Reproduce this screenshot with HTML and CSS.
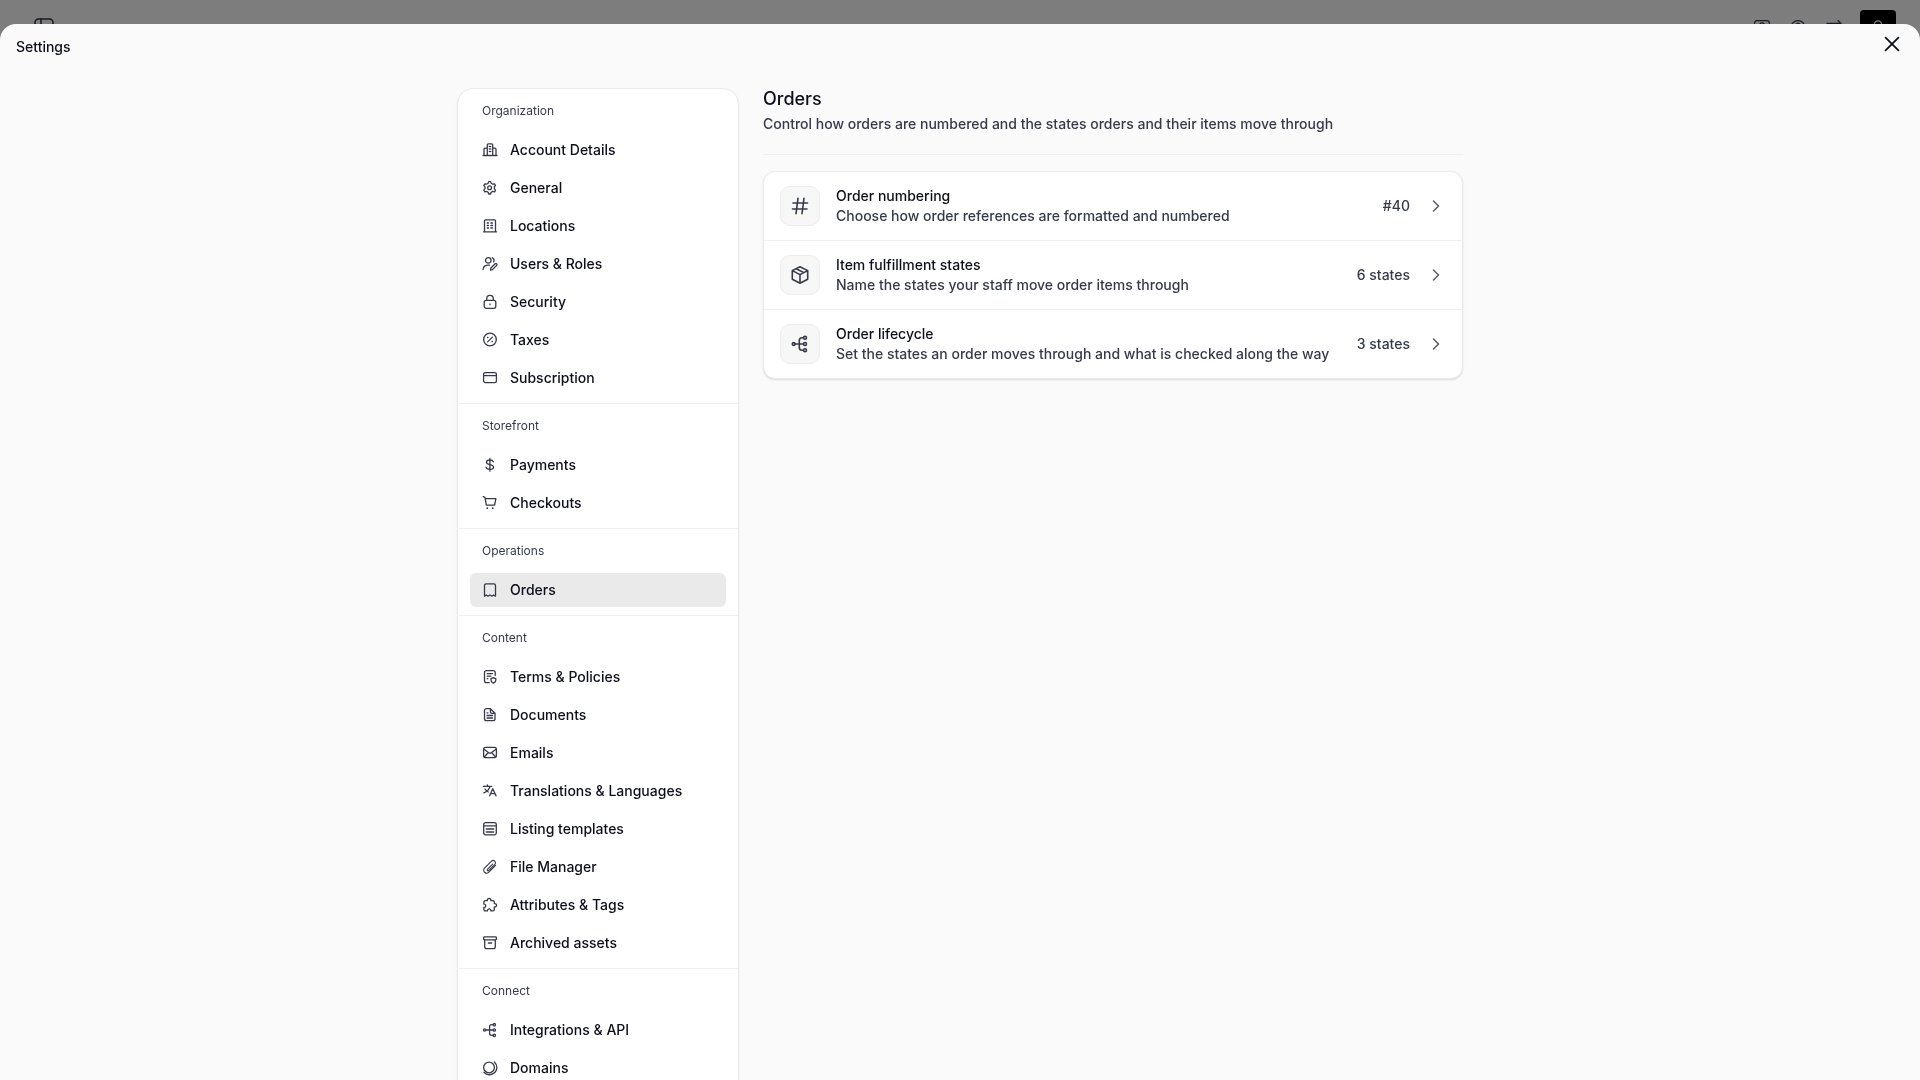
FILE: index.html
```html
<!DOCTYPE html>
<html lang="en">

<head>
    <meta charset="UTF-8">
    <meta name="viewport" content="width=device-width, initial-scale=1.0">
    <title>Settings</title>
    <link rel="stylesheet" href="styles.css">
</head>

<body>
    <header class="topbar">
        <button class="top-btn" aria-label="Toggle sidebar">
            <svg class="icon icon-lg" viewBox="0 0 20 20"><rect x="1" y="1" width="18" height="18" rx="3.5" /><path d="M7 1v18" /></svg>
        </button>
        <div class="top-actions">
            <button class="top-btn" aria-label="Contacts">
                <svg class="icon" viewBox="0 0 16 16"><rect x=".5" y=".7" width="15" height="14.6" rx="2.5" /><circle cx="8" cy="5" r="2.2" /><path d="M4 12c1-3 7-3 8 0" /></svg>
            </button>
            <button class="top-btn" aria-label="Help">
                <svg class="icon" viewBox="0 0 16 16"><circle cx="8" cy="8" r="7.3" /><path d="M6 5.5a2 2 0 1 1 2 2V10" /></svg>
            </button>
            <button class="top-btn" aria-label="Switch">
                <svg class="icon" viewBox="0 0 16 16"><path d="M1 3.4h14M12 .6l3 2.800-3 2.800M15 12H1M4 9l-3 3 3 3" /></svg>
            </button>
            <button class="top-btn avatar" aria-label="Profile">
                <svg class="icon" viewBox="0 0 16 16"><circle cx="8" cy="4.400" r="3.600" /><path d="M1 15c1-6 13-6 14 0" /></svg>
            </button>
        </div>
    </header>

    <div class="backdrop"></div>

    <main class="sheet">
        <div class="sheet-head">
            <h1>Settings</h1>
            <button class="close" aria-label="Close">
                <svg class="icon icon-lg" viewBox="0 0 20 20"><path d="M3.600 3.600l12.800 12.800M16.400 3.600L3.600 16.400" /></svg>
            </button>
        </div>

        <div class="layout">
            <nav class="sidebar">
                <section class="group">
                    <h2>Organization</h2>
                    <ul>
                        <li><a href="#"><svg class="icon" viewBox="0 0 16 16"><path d="M1 13.500h14M5.300 13.500V2.800a1 1 0 0 1 1-1h3.400a1 1 0 0 1 1 1v10.700M2 13.500V7.200a1 1 0 0 1 1-1h2.300M10.700 6.200H13a1 1 0 0 1 1 1v6.300M7.300 4.500h.2M8.600 4.500h.2M7.300 7h.2M8.600 7h.2M7.300 9.500h.2M8.600 9.500h.2" /></svg>Account Details</a></li>
                        <li><a href="#"><svg class="icon" viewBox="0 0 16 16"><path d="M6.700 1.600h1.900l.6 1.700 1.500.9 1.800-.4 1 1.700-1.200 1.400v1.800l1.200 1.400-1 1.700-1.800-.4-1.500.9-.6 1.700H6.700l-.6-1.700-1.500-.9-1.800.4-1-1.700L3 8.700V6.900L1.800 5.500l1-1.700 1.800.4 1.500-.9z" /><circle cx="7.600" cy="7.800" r="1.900" /></svg>General</a></li>
                        <li><a href="#"><svg class="icon" viewBox="0 0 16 16"><path d="M1.500 13.800h13M2.500 13.800V2.700c0-.5.4-.9.900-.9h9.200c.5 0 .9.400.9.900v11.100M5.200 5h1.200M8.900 5h1.600M5.200 7.500h1.200M8.900 7.500h1.600M5.200 10h1.200M8.900 10h1.600" /></svg>Locations</a></li>
                        <li><a href="#"><svg class="icon" viewBox="0 0 16 16"><circle cx="6.300" cy="4.400" r="2.800" /><path d="M10.400 1.800c1.500.7 2 2.600 1.200 4.100M1 13.500c.2-3.300 3-5 6.500-4.300M8.500 14l.4-2 4.200-4.200c1.200-.8 2.400.4 1.600 1.600L10.500 13.600z" /></svg>Users &amp; Roles</a></li>
                        <li><a href="#"><svg class="icon" viewBox="0 0 16 16"><rect x="2.200" y="6.300" width="11.600" height="8" rx="2" /><path d="M4.700 6.300V4.700a3.300 3.300 0 0 1 6.600 0v1.600M8 9.900v.8" /></svg>Security</a></li>
                        <li><a href="#"><svg class="icon" viewBox="0 0 16 16"><circle cx="8" cy="7.500" r="6.300" /><path d="M5.600 9.900l4.800-4.800M5.500 5.500h.5M10 9.500h.5" /></svg>Taxes</a></li>
                        <li><a href="#"><svg class="icon" viewBox="0 0 16 16"><rect x="1.600" y="2.600" width="12.800" height="10" rx="1.600" /><path d="M1.600 5.600h12.800" /></svg>Subscription</a></li>
                    </ul>
                </section>

                <section class="group">
                    <h2>Storefront</h2>
                    <ul>
                        <li><a href="#"><svg class="icon" viewBox="0 0 16 16"><path d="M11.300 4.800C10.800 3.500 9.500 3 7.700 3 5.600 3 4.400 3.900 4.400 5.200c0 3.300 7.200 1.300 7.200 4.900 0 1.500-1.400 2.400-3.700 2.400-2.200 0-3.500-.8-3.900-2.300M7.900 1.500v12.700" /></svg>Payments</a></li>
                        <li><a href="#"><svg class="icon" viewBox="0 0 16 16"><path d="M1.200 1.600l1.800.8 1.300 7.800h8.300l1.300-6.600H3.300" /><circle class="dot" cx="5.300" cy="13.200" r=".9" /><circle class="dot" cx="10.700" cy="13.200" r=".9" /></svg>Checkouts</a></li>
                    </ul>
                </section>

                <section class="group">
                    <h2>Operations</h2>
                    <ul>
                        <li><a href="#" class="active" aria-current="page"><svg class="icon" viewBox="0 0 16 16"><path d="M2.500 14.200V3.400c0-.9.7-1.600 1.600-1.600h7.800c.9 0 1.600.7 1.600 1.600v10.800l-1.800-1.200-1.800 1.200L8 13l-1.900 1.200L4.300 13z" /></svg>Orders</a></li>
                    </ul>
                </section>

                <section class="group">
                    <h2>Content</h2>
                    <ul>
                        <li><a href="#"><svg class="icon" viewBox="0 0 16 16"><path d="M13.200 6.400V3.600c0-1-.8-1.900-1.900-1.900H4.400c-1 0-1.900.8-1.900 1.900v8.200c0 1 .8 1.900 1.900 1.900h2.800M5.200 4.600h5.300M5.200 7.200h3.600M5.200 9.700h.6M11.400 8.700l2.400.9v1.700c0 1.300-.9 2.100-2.400 2.800-1.500-.7-2.400-1.500-2.400-2.800V9.600z" /></svg>Terms &amp; Policies</a></li>
                        <li><a href="#"><svg class="icon" viewBox="0 0 16 16"><path d="M8.400 1.700h-4c-1 0-1.900.8-1.900 1.900v8.200c0 1 .8 1.900 1.900 1.900h6.700c1 0 1.900-.8 1.900-1.900V6.300zM8.400 1.700v3.200c0 .8.600 1.400 1.400 1.400H13M5 5.800h1M5 8.500h5.500M5 11h5.500" /></svg>Documents</a></li>
                        <li><a href="#"><svg class="icon" viewBox="0 0 16 16"><rect x="1.600" y="2.400" width="12.800" height="10.200" rx="1.800" /><path d="M2 4.200l4.800 3.500c.7.500 1.700.5 2.400 0L14 4.200M2.200 12l3.700-4M13.800 12l-3.700-4" /></svg>Emails</a></li>
                        <li><a href="#"><svg class="icon" viewBox="0 0 16 16"><path d="M1.400 3.400h8.200M5.500 1.900v1.500M8 3.400C7.200 6.500 4.800 8.800 1.800 9.900M3 6c.8 1.400 1.900 2.300 3.200 3M7.600 12.800l3.200-7 3.200 7M8.700 10.700h4.200" /></svg>Translations &amp; Languages</a></li>
                        <li><a href="#"><svg class="icon" viewBox="0 0 16 16"><rect x="1.700" y="1.700" width="12.600" height="12.200" rx="1.800" /><path d="M1.700 4.900h12.600M4.300 8h7.400M4.300 11h7.400" /></svg>Listing templates</a></li>
                        <li><a href="#"><svg class="icon icon-thin" viewBox="0 0 16 16"><path d="M10.600 5.200l-5.200 5.200c-.8.800.4 2 1.200 1.200l6-6c2.300-2.300-1-5.600-3.300-3.300L2.700 8.900c-3 3 1.200 7.200 4.200 4.200L13.600 6.400" /></svg>File Manager</a></li>
                        <li><a href="#"><svg class="icon" viewBox="0 0 16 16"><path d="M5.400 3.700c-.6-3 3.900-3 3.400 0h2.100c.8 0 1.400.6 1.400 1.400v1.500c3-.4 3 3.800 0 3.400v2.500c0 .8-.6 1.400-1.400 1.400H8.900c.3-2.700-3.700-2.700-3.400 0H3.300c-.8 0-1.400-.6-1.400-1.400v-2.100c2.500.4 2.500-3.500 0-3.200V5.100c0-.8.600-1.400 1.400-1.400z" /></svg>Attributes &amp; Tags</a></li>
                        <li><a href="#"><svg class="icon" viewBox="0 0 16 16"><rect x="1.600" y="1.900" width="12.800" height="3" rx=".8" /><path d="M2.700 4.900v6.800c0 1.100.8 1.900 1.900 1.900h6.800c1.100 0 1.900-.8 1.900-1.900V4.900M6.300 8h3.400" /></svg>Archived assets</a></li>
                    </ul>
                </section>

                <section class="group">
                    <h2>Connect</h2>
                    <ul>
                        <li><a href="#"><svg class="icon" viewBox="0 0 16 16"><circle cx="2.600" cy="8" r="1.100" /><circle cx="12.300" cy="2.700" r="1.200" /><circle cx="12.300" cy="8" r="1.200" /><circle cx="12.300" cy="13.300" r="1.200" /><path d="M3.700 8h7.400M11.100 2.700H9.600c-1.200 0-2 .8-2 2v6.600c0 1.200.8 2 2 2h1.500" /></svg>Integrations &amp; API</a></li>
                        <li><a href="#"><svg class="icon" viewBox="0 0 16 16"><circle cx="7" cy="7.500" r="5.400" /><path d="M12.300 2c3.900 3.500 3.200 9.700-1.600 11.900-3 1.300-6.500.8-8.700-1.600" /></svg>Domains</a></li>
                    </ul>
                </section>
            </nav>

            <div class="content">
                <div class="content-head">
                    <h2>Orders</h2>
                    <p>Control how orders are numbered and the states orders and their items move through</p>
                </div>

                <div class="card">
                    <a href="#" class="row">
                        <span class="tile"><svg class="icon icon-lg" viewBox="0 0 20 20"><path d="M3 7h14.500M2.500 13H17M8 2.300L6 17.700M14 2.300l-2 15.400" /></svg></span>
                        <span class="text">
                            <span class="title">Order numbering</span>
                            <span>Choose how order references are formatted and numbered</span>
                        </span>
                        <span>#40</span>
                        <svg class="icon icon-lg chevron" viewBox="0 0 20 20"><path d="M7.500 5l5 5-5 5" /></svg>
                    </a>
                    <a href="#" class="row">
                        <span class="tile"><svg class="icon icon-lg" viewBox="0 0 20 20"><path d="M10 1.800l7.700 3.800v8.700L10 18.300l-7.700-4V5.600zM2.300 5.600L10 9.600l7.700-4M10 9.600v8.700M6.200 3.700l7.700 3.900" /></svg></span>
                        <span class="text">
                            <span class="title">Item fulfillment states</span>
                            <span>Name the states your staff move order items through</span>
                        </span>
                        <span>6 states</span>
                        <svg class="icon icon-lg chevron" viewBox="0 0 20 20"><path d="M7.500 5l5 5-5 5" /></svg>
                    </a>
                    <a href="#" class="row">
                        <span class="tile"><svg class="icon icon-lg" viewBox="0 0 20 20"><circle cx="3.700" cy="10" r="1.400" /><circle cx="15" cy="3.800" r="1.500" /><circle cx="15" cy="10" r="1.500" /><circle cx="15" cy="16.200" r="1.500" /><path d="M5.100 10h8.400M13.500 3.800H12c-1.700 0-2.700 1-2.700 2.700v7c0 1.700 1 2.700 2.700 2.700h1.500" /></svg></span>
                        <span class="text">
                            <span class="title">Order lifecycle</span>
                            <span>Set the states an order moves through and what is checked along the way</span>
                        </span>
                        <span>3 states</span>
                        <svg class="icon icon-lg chevron" viewBox="0 0 20 20"><path d="M7.500 5l5 5-5 5" /></svg>
                    </a>
                </div>
            </div>
        </div>
    </main>
</body>

</html>
```
FILE: styles.css
```css
* {
    margin: 0;
    padding: 0;
    box-sizing: border-box;
}

body {
    font-family: Inter, sans-serif;
    font-size: 14px;
    font-weight: 500;
    line-height: 20px;
    color: #363a4b;
    background-color: #fafafa;
    overflow: hidden;
}

button {
    border: none;
    background: none;
    cursor: pointer;
}

a {
    color: inherit;
    text-decoration: none;
}

ul {
    list-style: none;
}

h1,
h2 {
    font-weight: 500;
    color: #0d0f1c;
}

.icon {
    width: 16px;
    height: 16px;
    flex-shrink: 0;
    display: block;
    fill: none;
    stroke: #363a4b;
    stroke-width: 1.3;
    stroke-linecap: round;
    stroke-linejoin: round;
}

.icon-lg {
    width: 20px;
    height: 20px;
    stroke-width: 1.6;
}

.icon-thin {
    stroke-width: 1.1;
}

.dot {
    fill: #363a4b;
    stroke: none;
}

/* page behind the sheet */
.topbar {
    display: flex;
    justify-content: space-between;
    align-items: center;
    height: 56px;
    padding: 0 24px 0 34px;
}

.top-actions {
    display: flex;
    align-items: center;
    gap: 16px;
}

.top-btn {
    display: flex;
    align-items: center;
    justify-content: center;
    width: 20px;
    height: 20px;
}

.avatar {
    width: 36px;
    height: 36px;
    border-radius: 4px;
    background-color: #000;
}

.avatar .icon {
    stroke: #fff;
}

.backdrop {
    position: fixed;
    inset: 0;
    background-color: rgba(0, 0, 0, 0.5);
}

.sheet {
    position: fixed;
    inset: 24px 0 0;
    overflow: hidden;
    border-radius: 16px 16px 0 0;
    background-color: #fafafa;
}

.sheet-head {
    display: flex;
    justify-content: space-between;
    align-items: flex-start;
    height: 64px;
    padding: 10px 18px 0 16px;
}

.sheet-head h1 {
    font-size: 14px;
    line-height: 26px;
}

.close .icon {
    stroke: #0d0f1c;
    stroke-width: 1.8;
}

.layout {
    display: flex;
    align-items: flex-start;
    gap: 24px;
    max-width: 1006px;
    margin: 0 auto;
}

.sidebar,
.card {
    border: 1px solid #ebebec;
    background-color: #fff;
    background-clip: padding-box;
}

.sidebar {
    width: 282px;
    flex-shrink: 0;
    border-radius: 16px;
    box-shadow: 0 1px 2px rgba(0, 0, 0, 0.08);
}

.group {
    padding: 0 12px 8px;
    border-bottom: 1px solid #f0f0f2;
}

.group:last-child {
    border-bottom: none;
}

.group h2 {
    padding: 0 12px;
    font-size: 12px;
    font-weight: 400;
    line-height: 44px;
    color: #363a4b;
}

.group ul {
    display: flex;
    flex-direction: column;
    gap: 4px;
}

.group a {
    display: flex;
    align-items: center;
    gap: 12px;
    height: 34px;
    padding: 0 12px;
    border-radius: 6px;
    color: #0d0f1c;
}

.group .active {
    background-color: #eaeaea;
}

.content {
    flex: 1;
}

.content-head {
    padding-bottom: 20px;
    margin-bottom: 16px;
    border-bottom: 1px solid #f0f0f2;
}

.content-head h2 {
    margin-bottom: 4px;
    font-size: 18px;
    line-height: 22px;
}

.card {
    border-radius: 12px;
    box-shadow: 0 1px 2px rgba(0, 0, 0, 0.12);
}

.row {
    display: flex;
    align-items: center;
    gap: 16px;
    padding: 14px 16px;
}

.row + .row {
    border-top: 1px solid #f0f0f2;
}

.tile {
    display: flex;
    align-items: center;
    justify-content: center;
    width: 40px;
    height: 40px;
    border: 1px solid #ededee;
    border-radius: 10px;
    background-color: #f7f7f7;
}

.text {
    display: flex;
    flex-direction: column;
    flex: 1;
}

.title {
    color: #0d0f1c;
}

.chevron {
    stroke: #5c606e;
}
```
